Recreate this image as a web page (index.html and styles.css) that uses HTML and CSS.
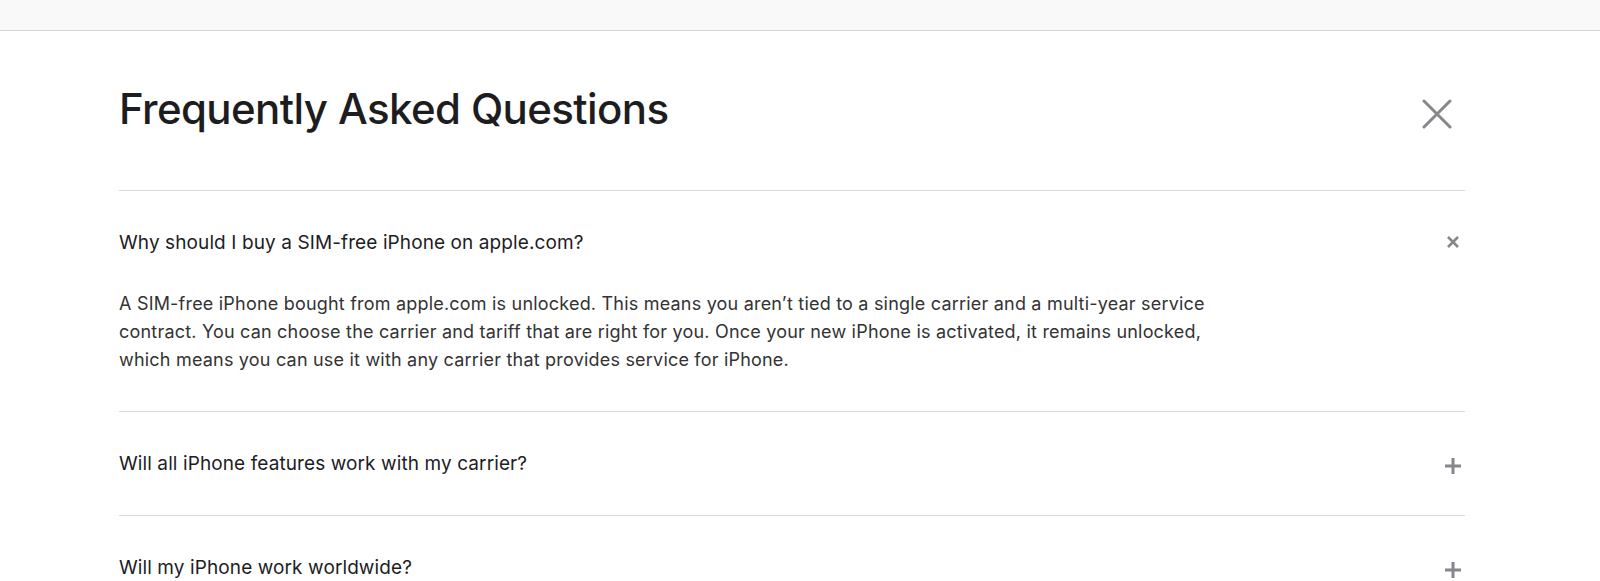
FILE: index.html
```html
<!DOCTYPE html>
<html lang="en">
<head>
    <meta charset="UTF-8">
    <meta name="viewport" content="width=device-width, initial-scale=1.0">
    <title>Frequently Asked Questions</title>
    <link rel="stylesheet" href="styles.css">
</head>
<body>
    <!-- Top strip -->
    <div class="top-bar"></div>

    <div class="faq-container">
        <div class="faq-header">
            <h1>Frequently Asked Questions</h1>
            <button class="close-btn" aria-label="Close">
                <svg width="30" height="30" viewBox="0 0 30 30">
                    <path d="M2 2 L28 28 M28 2 L2 28" stroke="#86868b" stroke-width="3" stroke-linecap="round"/>
                </svg>
            </button>
        </div>

        <!-- FAQ list -->
        <div class="faq-item open">
            <div class="faq-question">
                <span>Why should I buy a SIM-free iPhone on apple.com?</span>
                <svg class="faq-icon" width="14" height="14" viewBox="0 0 14 14">
                    <path d="M2 2 L12 12 M12 2 L2 12" stroke="#86868b" stroke-width="2.6"/>
                </svg>
            </div>
            <p class="faq-answer">A SIM-free iPhone bought from apple.com is unlocked. This means you aren’t tied to a single carrier and a multi-year service contract. You can choose the carrier and tariff that are right for you. Once your new iPhone is activated, it remains unlocked, which means you can use it with any carrier that provides service for iPhone.</p>
        </div>

        <div class="faq-item">
            <div class="faq-question">
                <span>Will all iPhone features work with my carrier?</span>
                <svg class="faq-icon plus" width="18" height="18" viewBox="0 0 18 18">
                    <path d="M9 1 V17 M1 9 H17" stroke="#86868b" stroke-width="3"/>
                </svg>
            </div>
        </div>

        <div class="faq-item">
            <div class="faq-question">
                <span>Will my iPhone work worldwide?</span>
                <svg class="faq-icon plus" width="18" height="18" viewBox="0 0 18 18">
                    <path d="M9 1 V17 M1 9 H17" stroke="#86868b" stroke-width="3"/>
                </svg>
            </div>
        </div>
    </div>
</body>
</html>
```

FILE: styles.css
```css
body {
    margin: 0;
    font-family: Inter, "Noto Sans", Arial, sans-serif;
    background-color: #fff;
    color: #1d1d1f;
}

.top-bar {
    height: 30px;
    background-color: #f9f9f9;
    border-bottom: 1px solid #d6d6d6;
}

.faq-container {
    width: 1346px;
    padding-left: 119px;
}

.faq-header {
    display: flex;
    justify-content: space-between;
    align-items: center;
    height: 159px;
    border-bottom: 1px solid #d9d9d9;
}

.faq-header h1 {
    margin: 0 0 4px 0;
    font-size: 42px;
    font-weight: 500;
    letter-spacing: -0.6px;
}

.close-btn {
    background: none;
    border: none;
    padding: 0;
    margin: 6px 13px 0 0;
    cursor: pointer;
}

.close-btn svg {
    display: block;
}

.faq-item {
    border-bottom: 1px solid #d9d9d9;
    padding: 39px 0 40px 0;
}

.faq-item.open {
    padding-bottom: 37px;
}

.faq-question {
    display: flex;
    justify-content: space-between;
    align-items: center;
    height: 24px;
    font-size: 19px;
    font-weight: 400;
    letter-spacing: 0.1px;
}

.faq-icon {
    margin-right: 5px;
}

.faq-icon.plus {
    margin: 6px 3px 0 0;
}

.faq-answer {
    max-width: 1100px;
    margin: 36px 0 0 0;
    font-size: 18px;
    line-height: 28px;
    letter-spacing: 0.2px;
    color: #333;
}
```
